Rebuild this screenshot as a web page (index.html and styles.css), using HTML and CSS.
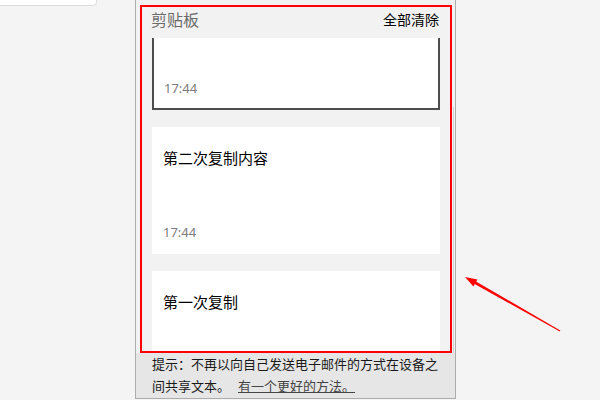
FILE: index.html
```html
<!DOCTYPE html>
<html lang="zh">
<head>
<meta charset="utf-8">
<link rel="stylesheet" href="styles.css">
</head>
<body>
<div class="desk">
  <div class="topcard"></div>
  <div class="panel">
    <div class="header">
      <span class="title">剪贴板</span>
      <span class="clear">全部清除</span>
    </div>
    <div class="scroll">
      <div class="list">
        <div class="card selected">
          <div class="text"></div>
          <div class="time">17:44</div>
        </div>
        <div class="card">
          <div class="text">第二次复制内容</div>
          <div class="time">17:44</div>
        </div>
        <div class="card">
          <div class="text">第一次复制</div>
          <div class="time">17:44</div>
        </div>
      </div>
      <div class="scrollbar"></div>
    </div>
    <div class="footer">
      <div class="line">提示：不再以向自己发送电子邮件的方式在设备之</div>
      <div class="line">间共享文本。<a class="link">有一个更好的方法。</a></div>
    </div>
  </div>
  <div class="mark"></div>
  <svg class="arrow" width="600" height="400" viewBox="0 0 600 400">
    <polygon points="473.3,283.3 474.7,280.7 560.3,330.6 559.8,331.4" fill="#ff0000"/>
    <polygon points="465,277 477.4,279.4 473.4,286.4" fill="#ff0000"/>
  </svg>
</div>
</body>
</html>
```
FILE: styles.css
```css
* { box-sizing: border-box; }
html, body { margin: 0; padding: 0; }
body {
  background: #f4f4f4;
  font-family: "Noto Sans CJK SC", "Noto Sans", sans-serif;
  width: 600px;
  height: 400px;
  overflow: hidden;
}
.desk { position: relative; width: 600px; height: 400px; }
.topcard {
  position: absolute;
  left: -1px; top: -1px;
  width: 98px; height: 7px;
  background: #fff;
  border: 1px solid #dcdcdc;
  border-radius: 0 0 4px 0;
}
.panel {
  position: absolute;
  left: 135px; top: -1px;
  width: 321px; height: 400px;
  background: #f2f2f2;
  border: 1px solid #acacac;
  border-top: none;
  display: flex;
  flex-direction: column;
}
.header {
  height: 39px;
  flex: none;
  display: flex;
  align-items: center;
  justify-content: space-between;
  padding: 0 16px 0 15px;
}
.title { font-size: 16px; color: #6b6b6b; line-height: 20px; }
.clear { font-size: 14px; color: #000; line-height: 20px; }
.scroll {
  flex: 1;
  overflow: hidden;
  position: relative;
  padding: 0 15px 0 16px;
}
.list {
  margin-top: -55px;
  display: flex;
  flex-direction: column;
  gap: 17px;
}
.card {
  background: #fff;
  height: 127px;
  padding: 21px 11px 13px 11px;
  display: flex;
  flex-direction: column;
  justify-content: space-between;
}
.card.selected {
  border: 2px solid #4d4d4d;
  padding: 19px 9px 11px 10px;
}
.text { font-size: 15px; line-height: 20px; color: #000; min-height: 20px; }
.time { font-family: "Noto Sans", sans-serif; font-size: 13px; line-height: 18px; color: #7c7c7c; }
.scrollbar {
  position: absolute;
  right: 1px; top: 69px; bottom: 0;
  width: 1px;
  background: #d2d2d2;
}
.footer {
  flex: none;
  height: 45px;
  background: #e6e6e6;
  font-size: 13px;
  color: #1a1a1a;
  padding: 0 12px 0 16px;
}
.line { height: 22px; line-height: 22px; white-space: nowrap; }
.link {
  margin-left: 8px;
  color: #444;
  text-decoration: underline;
}
.mark {
  position: absolute;
  left: 140px; top: 5px;
  width: 312px; height: 348px;
  border: 2px solid #ff0000;
}
.arrow { position: absolute; left: 0; top: 0; }
```
